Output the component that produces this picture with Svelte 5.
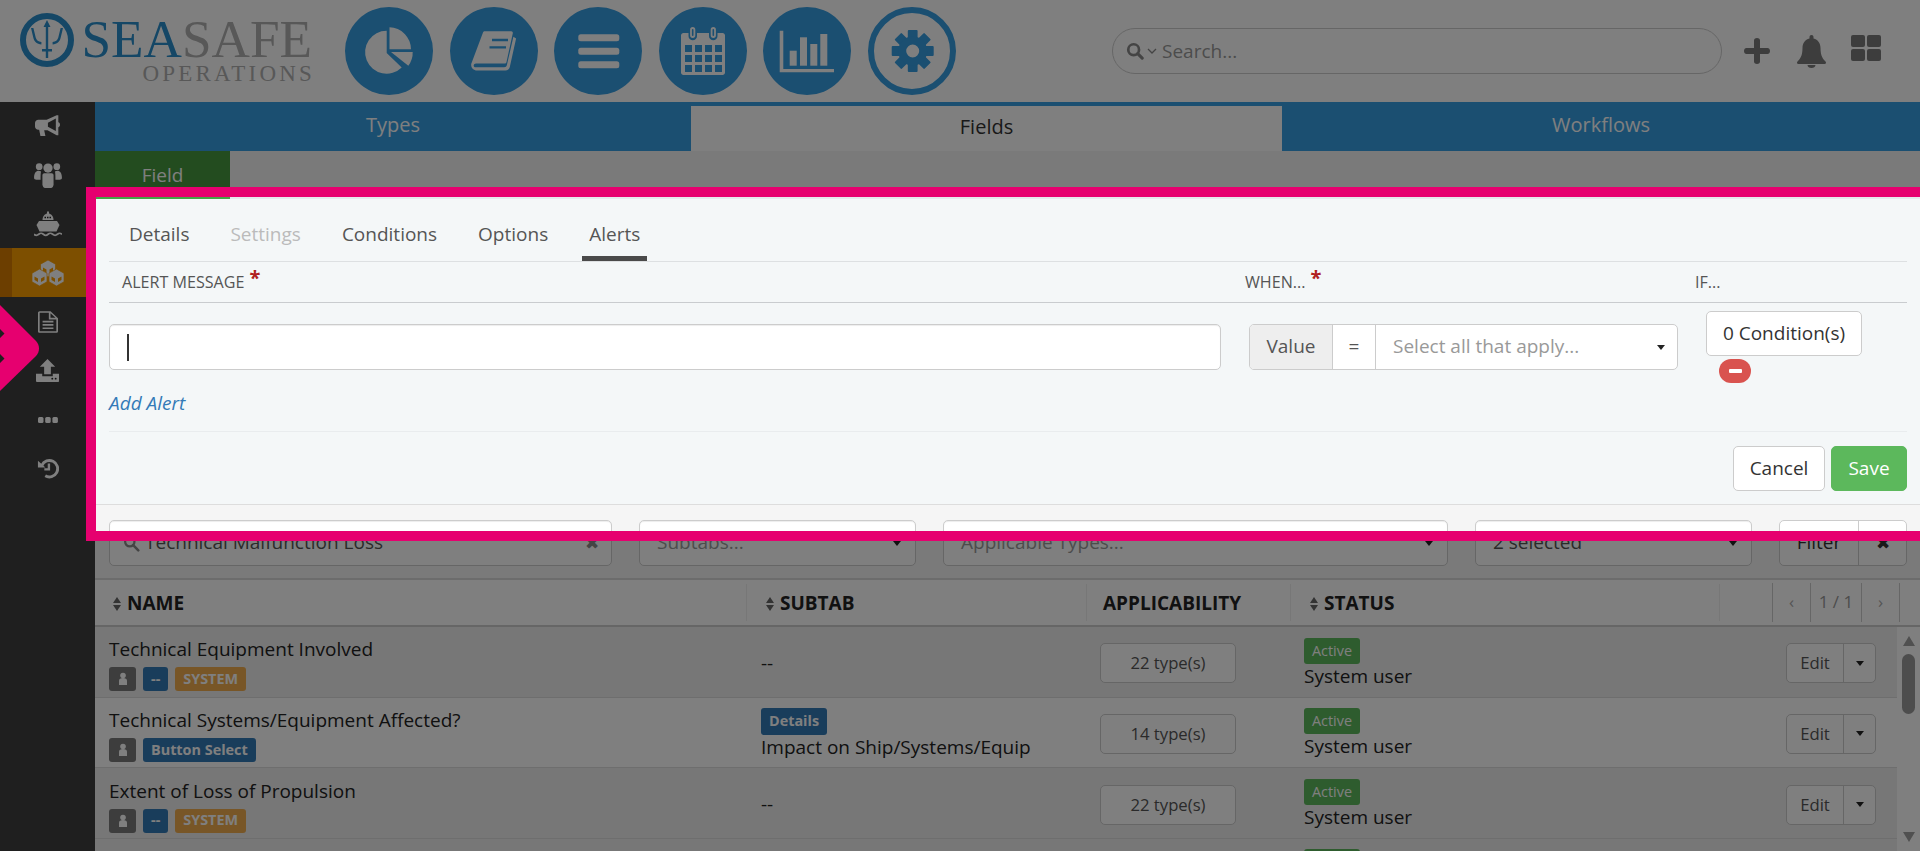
<script>
const gearTeeth = [0, 45, 90, 135, 180, 225, 270, 315];

const cubes = [
	{ x: 8.500, y: 0 },
	{ x: 0, y: 9 },
	{ x: 17, y: 9 }
];

const rows = [
	{ name: 'Technical Equipment Involved', kind: '--', system: true, tab: '', subtab: '--', types: '22 type(s)' },
	{ name: 'Technical Systems/Equipment Affected?', kind: 'Button Select', system: false, tab: 'Details', subtab: 'Impact on Ship/Systems/Equip', types: '14 type(s)' },
	{ name: 'Extent of Loss of Propulsion', kind: '--', system: true, tab: '', subtab: '--', types: '22 type(s)' }
];
</script>

<div class="page">
	<header class="topbar">
		<div class="logo">
			<svg class="trident" viewBox="0 0 54 54" aria-hidden="true">
				<circle cx="27" cy="27" r="24" fill="none" stroke="#2a8fcc" stroke-width="6" />
				<path d="M27 7l3.500 7h-2.300v31h-2.400v-31h-2.300zM11 15l2.400 10c.8 3.600 3.600 6 8 6.400v-2.400c-3-.4-5-2-5.700-4.600l-2.300-9.400zM43 15l-2.400 10c-.8 3.600-3.600 6-8 6.400v-2.400c3-.4 5-2 5.700-4.600l2.300-9.400zM22 36h10v2.400h-10z" fill="#2a8fcc" />
			</svg>
			<div class="logo-text">
				<div class="logo-name"><span class="sea">SEA</span><span class="safe">SAFE</span></div>
				<div class="logo-sub">OPERATIONS</div>
			</div>
		</div>

		<nav class="circles">
			<span class="circle">
				<svg viewBox="0 0 88 88" aria-hidden="true">
					<path d="M41.700 23.700A21.500 21.500 0 1 0 56.700 60.500L41.700 46z" fill="#fff" />
					<path d="M44.500 20.300A22 22 0 0 1 66 42.300H44.500z" fill="#fff" />
					<path d="M46 44.900H67.700A22 22 0 0 1 63.300 58.700z" fill="#fff" />
				</svg>
			</span>
			<span class="circle">
				<svg viewBox="0 0 88 88" aria-hidden="true">
					<path d="M33 25.500c.3-.8 1-1.200 1.800-1.200h26.500c1 0 1.700 1 1.500 2l-6.300 28.700c-.2 1-1 1.500-2 1.500H26c-1.200 0-2.500 1-2.300 2.300.2 1 1 1.500 2 1.500h28.500c1.500 0 2.300-.7 2.700-2.200l6.500-28.400 2.700 1.800-6.300 28.500c-.4 1.800-2.100 3.500-4.400 3.500H27c-3.500 0-6.200-2.500-5.800-6.500z" fill="#fff" />
					<path d="M42 33h16M39.500 40.300h16.500" stroke="#369ee2" stroke-width="2.300" fill="none" />
				</svg>
			</span>
			<span class="circle">
				<svg viewBox="0 0 88 88" aria-hidden="true">
					<rect x="24.300" y="27.300" width="41" height="7" rx="2.500" fill="#fff" />
					<rect x="24.300" y="40.700" width="41" height="7" rx="2.500" fill="#fff" />
					<rect x="24.300" y="54.300" width="41" height="7" rx="2.500" fill="#fff" />
				</svg>
			</span>
			<span class="circle">
				<svg viewBox="0 0 88 88" aria-hidden="true">
					<path d="M24.500 26h5v3a4 4 0 0 0 8.500 0v-3h12v3a4 4 0 0 0 8.500 0v-3h5c1.400 0 2.500 1.100 2.500 2.500v37c0 1.400-1.100 2.500-2.500 2.500h-39c-1.400 0-2.500-1.100-2.500-2.500v-37c0-1.400 1.100-2.500 2.500-2.500z" fill="#fff" />
					<rect x="32" y="21" width="3.400" height="9" rx="1.700" fill="none" stroke="#fff" stroke-width="1.800" />
					<rect x="52.600" y="21" width="3.400" height="9" rx="1.700" fill="none" stroke="#fff" stroke-width="1.800" />
					{#each [38, 48, 58] as y}
						{#each [26, 36, 46, 56] as x}
							<rect {x} {y} width="7" height="7" fill="#369ee2" />
						{/each}
					{/each}
				</svg>
			</span>
			<span class="circle">
				<svg viewBox="0 0 88 88" aria-hidden="true">
					<path d="M16.700 23.700h3.600v38.300h50.700v3.300H16.700z" fill="#fff" />
					<rect x="26.700" y="43.700" width="7" height="15" fill="#fff" />
					<rect x="37" y="30.300" width="7" height="28.400" fill="#fff" />
					<rect x="47.300" y="37" width="7" height="21.700" fill="#fff" />
					<rect x="57.300" y="27" width="7" height="31.700" fill="#fff" />
				</svg>
			</span>
			<span class="circle outline">
				<svg viewBox="0 0 88 88" aria-hidden="true">
					<g fill="#369ee2">
						{#each gearTeeth as deg}
							<rect x="39.800" y="23" width="9.800" height="10" rx="1" transform="rotate({deg} 44.700 44)" />
						{/each}
					</g>
					<circle cx="44.700" cy="44" r="10.500" fill="none" stroke="#369ee2" stroke-width="8" />
				</svg>
			</span>
		</nav>

		<div class="search">
			<svg class="search-icon" viewBox="0 0 20 20" aria-hidden="true">
				<circle cx="8.500" cy="8.500" r="6" fill="none" stroke="#888" stroke-width="3" />
				<path d="M13 13l5 5" stroke="#888" stroke-width="3.400" stroke-linecap="round" />
			</svg>
			<svg class="search-caret" viewBox="0 0 10 6" aria-hidden="true">
				<path d="M1 1l4 4 4-4" fill="none" stroke="#888" stroke-width="1.300" />
			</svg>
			<span class="search-text">Search...</span>
		</div>

		<div class="tools">
			<svg class="tool-plus" viewBox="0 0 26 26" aria-hidden="true">
				<path d="M10 2.500c0-1.400 1-2.500 3-2.500s3 1.100 3 2.500V10h7.500c1.400 0 2.500 1 2.500 3s-1.100 3-2.500 3H16v7.500c0 1.400-1 2.500-3 2.500s-3-1.100-3-2.500V16H2.500C1.100 16 0 15 0 13s1.100-3 2.500-3H10z" fill="#7a7a7a" />
			</svg>
			<svg class="tool-bell" viewBox="0 0 31 33" aria-hidden="true">
				<path d="M15.500 0c1.200 0 2 .8 2 2v1.500c4.600 1 7 5 7 9.500 0 8 2.500 11 5 13.500 1 1 .5 2.500-1 2.500H2.500c-1.500 0-2-1.500-1-2.500 2.500-2.500 5-5.500 5-13.500 0-4.500 2.400-8.500 7-9.500V2c0-1.200.8-2 2-2zM11.500 30h8c0 1.800-1.800 3-4 3s-4-1.200-4-3z" fill="#7a7a7a" />
			</svg>
			<div class="tool-grid"><i></i><i></i><i></i><i></i></div>
		</div>
	</header>

	<div class="body">
		<aside class="sidebar">
			<div class="side-item first">
				<svg class="icon-horn" viewBox="0 0 30 26" aria-hidden="true">
					<path fill-rule="evenodd" d="M26 0h2v8.500c1.200.5 2 1.300 2 3s-.8 2.500-2 3V24h-2l-11-6H11l1.500 7H6.500L5 17.500H4c-2.200 0-4-1.800-4-4v-4c0-2.200 1.800-4 4-4h10zM25 4l-9.500 5v5l9.500 5z" fill="#fff" />
				</svg>
			</div>
			<div class="side-item">
				<svg viewBox="0 0 30 28" aria-hidden="true">
					<circle cx="5.500" cy="5" r="3.600" fill="#fff" /><circle cx="24.500" cy="5" r="3.600" fill="#fff" />
					<circle cx="15" cy="6.500" r="5" fill="#fff" />
					<path d="M0 17c0-5 2-7.500 5-7.500 1 0 1.500.3 2.500.8-.5 2-.5 5-.5 8.700H2.500C1 19 0 18.500 0 17zM30 17c0-5-2-7.500-5-7.500-1 0-1.500.3-2.500.8.500 2 .5 5 .5 8.700h4.500c1.500 0 2.500-.5 2.500-2z" fill="#fff" />
					<path d="M9 14c0-1 1-2 2-2h8c1 0 2 1 2 2v10c0 2-1 4-3 4h-6c-2 0-3-2-3-4z" fill="#fff" />
				</svg>
			</div>
			<div class="side-item">
				<svg viewBox="0 0 28 25" aria-hidden="true">
					<rect x="13" y="0" width="2" height="2.500" fill="#fff" />
					<path d="M8.500 8.500C8.500 4.500 11 2 14 2s5.500 2.500 5.500 6.500z" fill="#fff" />
					<path d="M10.500 6h7" stroke="#222" stroke-width="1.500" stroke-dasharray="1.500 1" />
					<path d="M5 9.500h18l2.500 4-3 6.500H5.500l-3-6.500z" fill="#fff" />
					<path d="M0 22.800c2 1.600 2.700 1.600 4.700 0s2.700-1.600 4.700 0 2.700 1.600 4.600 0 2.700-1.600 4.700 0 2.700 1.600 4.700 0 2.700-1.600 4.600 0" fill="none" stroke="#fff" stroke-width="1.800" />
				</svg>
			</div>
			<div class="side-item active">
				<svg class="icon-cubes" viewBox="0 0 32 26" aria-hidden="true">
					{#each cubes as cube}
						<g transform="translate({cube.x} {cube.y})">
							<path d="M7.500 0L15 4.200v8.600L7.500 17 0 12.800V4.200z" fill="#fff" stroke="#fa9f00" stroke-width=".7" />
							<path d="M2.500 7.500l3.500 2v3.500l-3.500-2zM12.500 7.500l-3.500 2v3.500l3.500-2z" fill="#fa9f00" />
						</g>
					{/each}
				</svg>
			</div>
			<div class="side-item">
				<svg class="icon-file" viewBox="0 0 24 26" aria-hidden="true">
					<path fill-rule="evenodd" d="M2 0h13l9 8.500V24c0 1.100-.9 2-2 2H2c-1.100 0-2-.9-2-2V2C0 .9.900 0 2 0zM2 2v22h20V10h-9V2zm13 .5V8h6z" fill="#fff" />
					<path d="M5.500 12.500h13M5.500 16.500h13M5.500 20.500h13" stroke="#fff" stroke-width="2" />
				</svg>
			</div>
			<div class="side-item">
				<svg class="icon-upload" viewBox="0 0 24 24" aria-hidden="true">
					<path d="M12 0l8 8h-4.500v8h-7V8H4z" fill="#fff" />
					<path d="M0 15.500h6.500V18h11v-2.500H24V23c0 .6-.4 1-1 1H1c-.6 0-1-.4-1-1z" fill="#fff" />
					<circle cx="17" cy="20.500" r="1" fill="#222" /><circle cx="20.500" cy="20.500" r="1" fill="#222" />
				</svg>
			</div>
			<div class="side-item">
				<svg class="icon-dots" viewBox="0 0 20 6" aria-hidden="true">
					<rect x="0" y="0" width="5.500" height="6" rx="1.500" fill="#fff" />
					<rect x="7.200" y="0" width="5.500" height="6" rx="1.500" fill="#fff" />
					<rect x="14.400" y="0" width="5.500" height="6" rx="1.500" fill="#fff" />
				</svg>
			</div>
			<div class="side-item">
				<svg class="icon-history" viewBox="0 0 24 22" aria-hidden="true">
					<path d="M5.300 7.500A9 9 0 1 1 9 19" fill="none" stroke="#fff" stroke-width="3.200" />
					<path d="M1 2.500l8.200 7.500H1z" fill="#fff" />
					<path d="M13 5.500v6.500H8" fill="none" stroke="#fff" stroke-width="2.600" />
				</svg>
			</div>
		</aside>

		<main class="content">
			<div class="main-tabs">
				<div class="main-tab">Types</div>
				<div class="main-tab current">Fields</div>
				<div class="main-tab">Workflows</div>
			</div>
			<div class="field-tab-row"><div class="field-tab">Field</div></div>

			<section class="panel">
				<div class="sub-tabs">
					<span class="sub-tab">Details</span>
					<span class="sub-tab disabled">Settings</span>
					<span class="sub-tab">Conditions</span>
					<span class="sub-tab">Options</span>
					<span class="sub-tab selected">Alerts</span>
				</div>

				<div class="alert-head">
					<span class="alert-label first">ALERT MESSAGE<b class="req">*</b></span>
					<span class="alert-label">WHEN...<b class="req">*</b></span>
					<span class="alert-label">IF...</span>
				</div>

				<div class="alert-row">
					<div class="field message"><span class="text-caret"></span></div>
					<div class="when">
						<span class="when-value">Value</span>
						<span class="when-eq">=</span>
						<span class="when-select">Select all that apply...<span class="caret"></span></span>
					</div>
					<div class="cond-col">
						<div class="btn cond">0 Condition(s)</div>
						<div class="remove"><span></span></div>
					</div>
				</div>
				<div class="add-alert">Add Alert</div>

				<div class="panel-foot">
					<div class="btn">Cancel</div>
					<div class="btn save">Save</div>
				</div>
			</section>

			<div class="filters">
				<div class="field search-filter">
					<svg viewBox="0 0 20 20" aria-hidden="true">
						<circle cx="8" cy="8" r="5.500" fill="none" stroke="#888" stroke-width="2.600" />
						<path d="M12 12l6 6" stroke="#888" stroke-width="3" stroke-linecap="round" />
					</svg>
					<span class="filter-value">Technical Malfunction Loss</span>
					<span class="clear">✖</span>
				</div>
				<div class="field select"><span class="placeholder">Subtabs...</span><span class="caret"></span></div>
				<div class="field select"><span class="placeholder">Applicable Types...</span><span class="caret"></span></div>
				<div class="field select"><span class="filter-value">2 selected</span><span class="caret"></span></div>
				<div class="filter-btns">
					<div class="filter-btn">Filter</div>
					<div class="filter-btn close">✖</div>
				</div>
			</div>

			<div class="table-head">
				<div class="th"><span class="sort"></span>NAME</div>
				<div class="th divided"><span class="sort"></span>SUBTAB</div>
				<div class="th divided plain">APPLICABILITY</div>
				<div class="th divided"><span class="sort"></span>STATUS</div>
				<div class="th divided pager-cell">
					<div class="pager">
						<span>‹</span><span class="pages">1 / 1</span><span>›</span>
					</div>
				</div>
			</div>

			<div class="table-body">
				<div class="rows">
					{#each rows as row, i}
						<div class="row" class:striped={i % 2 === 0}>
							<div class="cell name">
								<div class="row-name">{row.name}</div>
								<div class="badges">
									<span class="badge user">
										<svg viewBox="0 0 10 14" aria-hidden="true">
											<circle cx="5" cy="3.500" r="2.800" fill="#fff" />
											<path d="M1 13V8.500C1 7 2.500 6 5 6s4 1 4 2.500V13z" fill="#fff" />
										</svg>
									</span>
									<span class="badge blue">{row.kind}</span>
									{#if row.system}<span class="badge orange">SYSTEM</span>{/if}
								</div>
							</div>
							<div class="cell subtab">
								{#if row.tab}<span class="badge blue tab-badge">{row.tab}</span>{/if}
								<span>{row.subtab}</span>
							</div>
							<div class="cell applic"><div class="btn types">{row.types}</div></div>
							<div class="cell status">
								<span class="badge green">Active</span>
								<span>System user</span>
							</div>
							<div class="cell edit">
								<div class="edit-group"><span class="edit-label">Edit</span><span class="edit-drop"><span class="caret"></span></span></div>
							</div>
						</div>
					{/each}
					<div class="row striped">
						<div class="cell"></div>
						<div class="cell subtab"></div>
						<div class="cell applic"></div>
						<div class="cell status last"><span class="badge green"></span></div>
						<div class="cell edit"></div>
					</div>
				</div>
				<div class="scrollbar">
					<span class="arrow up"></span>
					<span class="thumb"></span>
					<span class="arrow down"></span>
				</div>
			</div>
		</main>
	</div>

	<!-- tutorial highlight on top of the page -->
	<div class="highlight"></div>
	<svg class="pointer" viewBox="0 0 41 86" aria-hidden="true">
		<path d="M0 0L36 36c4 4 4 11 0 15L0 86z" fill="#e6006f" />
		<path d="M0 24l4.500 4.500L0 33zM0 49l4.500 4.500L0 58z" fill="#1f1f1f" />
	</svg>
</div>

<style>
:global(body) {
	margin: 0;
	overflow: hidden;
	background: #fff;
}

.page {
	position: relative;
	width: 1920px;
	height: 851px;
	overflow: hidden;
	display: flex;
	flex-direction: column;
	font-family: "Open Sans", "Noto Sans", sans-serif;
	font-size: 19px;
	line-height: 1.32;
	color: #333;
}

/* header */
.topbar {
	height: 102px;
	flex: none;
	display: flex;
	align-items: center;
	background: #fff;
}

.logo {
	width: 345px;
	flex: none;
	display: flex;
	align-items: flex-start;
	height: 88px;
	padding-left: 20px;
	box-sizing: border-box;
}

.trident {
	width: 54px;
	height: 54px;
	margin-top: 6px;
}

.logo-text {
	margin-left: 7px;
	font-family: "Liberation Serif", serif;
	text-align: right;
	width: 231px;
}

.logo-name {
	font-size: 53.200px;
	line-height: 46px;
	margin-top: 10px;
	white-space: nowrap;
}

.sea { color: #2a8fcc; }
.safe { color: #b0b0b0; }

.logo-sub {
	font-size: 23px;
	line-height: 22px;
	letter-spacing: 3.200px;
	margin-right: -3px;
	color: #b0b0b0;
}

.circles {
	display: flex;
	gap: 16.500px;
	width: 767px;
	flex: none;
}

.circle {
	width: 88px;
	height: 88px;
	border-radius: 50%;
	background: #369ee2;
	box-sizing: border-box;
}

.circle svg {
	display: block;
	width: 88px;
	height: 88px;
}

.circle.outline {
	background: #fff;
	border: 6px solid #369ee2;
}

.circle.outline svg {
	margin: -6px;
}

.search {
	width: 610px;
	height: 46px;
	flex: none;
	box-sizing: border-box;
	border: 1.500px solid #ccc;
	border-radius: 23px;
	display: flex;
	align-items: center;
	padding-left: 13px;
}

.search-icon {
	width: 18px;
	height: 18px;
}

.search-caret {
	width: 10px;
	height: 6px;
	margin: 0 3px 0 3px;
}

.search-text {
	color: #999;
	margin-left: 2px;
	padding-top: 1px;
}

.tools {
	position: relative;
	flex: 1;
	height: 40px;
	display: flex;
	align-items: center;
	padding-left: 22px;
}

.tool-plus {
	width: 26px;
	height: 26px;
}

.tool-bell {
	width: 31px;
	height: 33px;
	margin-left: 26px;
}

.tool-grid {
	display: grid;
	grid-template-columns: 14px 14px;
	grid-auto-rows: 12px;
	gap: 2px;
	margin: -6px 0 0 24px;
}

.tool-grid i {
	background: #7a7a7a;
	border-radius: 2px;
}

/* body */
.body {
	flex: 1;
	display: flex;
	min-height: 0;
}

.sidebar {
	width: 95px;
	flex: none;
	background: #3e3e3e;
	display: flex;
	flex-direction: column;
}

.side-item {
	height: 49px;
	flex: none;
	display: flex;
	align-items: center;
	justify-content: center;
}

.side-item.first {
	height: 48px;
}

.side-item svg {
	width: 28px;
	height: 26px;
}

.side-item svg.icon-horn { width: 25px; }
.side-item svg.icon-cubes { width: 32px; }
.side-item svg.icon-file { width: 20px; height: 24px; }
.side-item svg.icon-upload { width: 23px; height: 23px; }
.side-item svg.icon-dots { width: 20px; height: 6px; }
.side-item svg.icon-history { width: 22px; height: 21px; }

.side-item.active {
	background: #fa9f00;
	border-left: 12px solid #d87c00;
	padding-right: 12px;
}

.content {
	flex: 1;
	min-width: 0;
	background: #f5f5f5;
	display: flex;
	flex-direction: column;
}

.main-tabs {
	display: grid;
	grid-template-columns: 596px 591px 1fr;
	height: 49px;
	flex: none;
	background: #369ee2;
}

.main-tab {
	display: flex;
	align-items: center;
	justify-content: center;
	color: #fff;
	font-size: 20px;
	padding-bottom: 2px;
	box-sizing: border-box;
}

.main-tab.current {
	background: #fff;
	color: #333;
	margin-top: 4px;
}

.field-tab-row {
	height: 46px;
	flex: none;
}

.field-tab {
	width: 135px;
	height: 48px;
	background: #47983e;
	color: #fff;
	box-sizing: border-box;
	text-align: center;
	padding-top: 12px;
}

.panel {
	position: relative;
	background: #f4f7f8;
	border-top: 2px solid #e6e9eb;
	padding: 0 13px 0 14px;
	box-sizing: border-box;
	height: 307px;
	flex: none;
}

.panel::before {
	content: "";
	position: absolute;
	left: 0;
	top: -2px;
	width: 135px;
	height: 2px;
	background: #47a447;
}

.sub-tabs {
	height: 62px;
	display: flex;
	align-items: flex-start;
	border-bottom: 1px solid #dde0e2;
	padding-left: 13px;
	gap: 27px;
}

.sub-tab {
	height: 56px;
	padding: 17px 7px 0;
	box-sizing: border-box;
	margin-top: 6px;
	white-space: nowrap;
	color: #555;
}

.sub-tab.disabled { color: #bbb; }

.sub-tab.selected {
	border-bottom: 5px solid #4a4a4a;
}

.alert-head {
	display: grid;
	grid-template-columns: 1136px 450px 1fr;
	height: 41px;
	align-items: center;
	border-bottom: 1px solid #c9cccf;
	box-sizing: border-box;
	padding-top: 2px;
}

.alert-label {
	font-size: 16.100px;
	color: #555;
}

.alert-label.first {
	padding-left: 13px;
}

.req {
	color: #b02020;
	font-size: 20px;
	line-height: 0;
	margin-left: 5px;
	position: relative;
	top: -3px;
}

.alert-row {
	display: grid;
	grid-template-columns: 1112px 429px 156px;
	column-gap: 28px;
	padding-top: 21px;
	height: 128px;
	box-sizing: border-box;
}

.field {
	height: 46px;
	box-sizing: border-box;
	background: #fff;
	border: 1px solid #ccc;
	border-radius: 5px;
	box-shadow: inset 0 1px 1px rgba(0, 0, 0, 0.075);
	display: flex;
	align-items: center;
}

.message {
	padding-left: 17px;
}

.text-caret {
	width: 1.500px;
	height: 27px;
	background: #333;
}

.when {
	display: flex;
	height: 46px;
	box-sizing: border-box;
	border: 1px solid #ccc;
	border-radius: 5px;
	background: #fff;
	overflow: hidden;
}

.when span {
	display: flex;
	align-items: center;
}

.when-value {
	width: 83px;
	justify-content: center;
	background: #eee;
	color: #555;
	border-right: 1px solid #ccc;
	box-sizing: border-box;
}

.when-eq {
	width: 43px;
	justify-content: center;
	color: #555;
	border-right: 1px solid #ccc;
	box-sizing: border-box;
}

.when-select {
	flex: 1;
	padding: 0 12px 0 17px;
	color: #999;
	justify-content: space-between;
}

.caret {
	width: 0;
	height: 0;
	border-left: 4.500px solid transparent;
	border-right: 4.500px solid transparent;
	border-top: 5px solid #222;
}

.cond-col {
	margin-top: -13px;
}

.btn {
	display: flex;
	align-items: center;
	justify-content: center;
	height: 45px;
	box-sizing: border-box;
	background: #fff;
	border: 1px solid #ccc;
	border-radius: 5px;
	color: #333;
}

.remove {
	width: 32px;
	height: 24px;
	margin: 3px 0 0 13px;
	background: #d9534f;
	border-radius: 12px;
	display: flex;
	align-items: center;
	justify-content: center;
}

.remove span {
	width: 13px;
	height: 4.500px;
	background: #fff;
	border-radius: 1px;
}

.add-alert {
	position: absolute;
	left: 14px;
	top: 192px;
	font-style: italic;
	color: #337ab7;
}

.panel-foot {
	border-top: 1px solid #e9ecee;
	height: 72px;
	display: flex;
	justify-content: flex-end;
	align-items: flex-start;
	padding-top: 14px;
	box-sizing: border-box;
	gap: 6px;
}

.panel-foot .btn {
	width: 92px;
	height: 45px;
}

.panel-foot .save {
	width: 76px;
	background: #5cb85c;
	border-color: #5cb85c;
	color: #fff;
}

.filters {
	display: grid;
	grid-template-columns: 503px 277px 505px 277px 128px;
	column-gap: 27px;
	padding: 15px 13px 0 14px;
	height: 76px;
	flex: none;
	box-sizing: border-box;
	border-top: 1px solid #ddd;
	border-bottom: 2px solid #d8d8d8;
	background: #f5f5f5;
}

.search-filter {
	padding: 0 12px 0 13px;
	gap: 5px;
}

.search-filter svg {
	width: 17px;
	height: 17px;
}

.filter-value {
	flex: 1;
	color: #555;
}

.clear {
	font-size: 17px;
	color: #888;
}

.select {
	padding: 0 14px 0 17px;
	justify-content: space-between;
}

.placeholder {
	color: #999;
}

.filter-btns {
	display: flex;
	height: 46px;
	border: 1px solid #ccc;
	border-radius: 5px;
	background: #fff;
	box-sizing: border-box;
}

.filter-btn {
	width: 78px;
	display: flex;
	align-items: center;
	justify-content: center;
	border-right: 1px solid #ccc;
	color: #333;
}

.filter-btn.close {
	flex: 1;
	border: none;
	font-size: 17px;
}

/* table */
.table-head {
	display: grid;
	grid-template-columns: 651px 340px 204px 429px 1fr;
	height: 47px;
	flex: none;
	background: #fff;
	border-bottom: 2px solid #ccc;
	box-sizing: border-box;
}

.th {
	display: flex;
	align-items: center;
	gap: 6px;
	padding-left: 18px;
	padding-top: 2px;
	font-weight: 700;
	color: #222;
	white-space: nowrap;
	position: relative;
}

.th.divided::before {
	content: "";
	position: absolute;
	left: 0;
	top: 4px;
	bottom: 4px;
	width: 1px;
	background: #eee;
}

.th.divided { padding-left: 20px; }
.th.plain { padding-left: 17px; }

.sort {
	width: 0;
	height: 14px;
	border-left: 4.500px solid transparent;
	border-right: 4.500px solid transparent;
	position: relative;
}

.sort::before,
.sort::after {
	content: "";
	position: absolute;
	left: -4.500px;
	border-left: 4.500px solid transparent;
	border-right: 4.500px solid transparent;
}

.sort::before {
	top: 0;
	border-bottom: 6px solid #666;
}

.sort::after {
	bottom: 0;
	border-top: 6px solid #666;
}

.pager-cell {
	justify-content: flex-end;
	padding: 0 20px 0 0;
	font-weight: 400;
	font-size: 17px;
}

.pager {
	display: flex;
	height: 39px;
	border-left: 1px solid #ccc;
	border-right: 1px solid #ccc;
}

.pager span {
	width: 37px;
	display: flex;
	align-items: center;
	justify-content: center;
	color: #aaa;
}

.pager .pages {
	width: 50px;
	border-left: 1px solid #ccc;
	border-right: 1px solid #ccc;
	color: #999;
}

.table-body {
	flex: 1;
	min-height: 0;
	display: flex;
	background: #fff;
}

.rows {
	flex: 1;
	min-width: 0;
}

.row {
	display: grid;
	grid-template-columns: 651px 340px 204px 1fr auto;
	height: 70.670px;
	box-sizing: border-box;
	border-bottom: 1.500px solid #ddd;
	background: #fff;
}

.row.striped {
	background: #eee;
}

.cell {
	display: flex;
	flex-direction: column;
	justify-content: center;
	align-items: flex-start;
	padding-left: 14px;
	padding-top: 3px;
	box-sizing: border-box;
	color: #222;
	white-space: nowrap;
}

.cell.name { padding-top: 5px; }
.cell.subtab { padding-left: 15px; }
.cell.status { padding-left: 14px; }
.cell.status.last { justify-content: flex-start; padding-top: 10px; }

.row-name {
	line-height: 25px;
}

.badges {
	display: flex;
	gap: 7px;
	margin-top: 5px;
}

.badge {
	display: inline-flex;
	align-items: center;
	justify-content: center;
	height: 24px;
	padding: 0 8px;
	box-sizing: border-box;
	border-radius: 3px;
	font-size: 14.400px;
	font-weight: 700;
	color: #fff;
	line-height: 1;
}

.badge.user {
	width: 27px;
	padding: 0;
	background: #7a7a7a;
}

.badge.user svg {
	width: 10px;
	height: 14px;
}

.badge.blue { background: #337ab7; }
.badge.orange { background: #f0ad4e; }

.tab-badge {
	height: 27px;
}

.badge.green {
	background: #5cb85c;
	height: 26px;
	min-width: 56px;
	font-weight: 400;
	font-size: 14.400px;
}

.types {
	width: 136px;
	height: 40px;
	font-size: 16.700px;
	color: #555;
}

.edit {
	padding: 3px 21px 0 0;
}

.edit-group {
	display: flex;
	width: 90px;
	height: 40px;
	border: 1px solid #ccc;
	border-radius: 5px;
	box-sizing: border-box;
	background: #fff;
	font-size: 16.700px;
	color: #555;
}

.edit-label {
	width: 56px;
	display: flex;
	align-items: center;
	justify-content: center;
	border-right: 1px solid #ccc;
}

.edit-drop {
	flex: 1;
	display: flex;
	align-items: center;
	justify-content: center;
}

.scrollbar {
	width: 23px;
	flex: none;
	position: relative;
	background: #fff;
}

.thumb {
	position: absolute;
	left: 5px;
	top: 27px;
	width: 13px;
	height: 60px;
	border-radius: 7px;
	background: #9a9a9a;
}

.arrow {
	position: absolute;
	left: 6px;
	width: 0;
	height: 0;
	border-left: 6px solid transparent;
	border-right: 6px solid transparent;
}

.arrow.up {
	top: 9px;
	border-bottom: 10px solid #a0a0a0;
}

.arrow.down {
	top: 205px;
	border-top: 10px solid #a0a0a0;
}

/* overlay */
.highlight {
	position: absolute;
	left: 86px;
	top: 187px;
	width: 1860px;
	height: 354px;
	box-sizing: border-box;
	border: 10px solid #e6006f;
	box-shadow: 0 0 0 3000px rgba(0, 0, 0, 0.5);
}

.pointer {
	position: absolute;
	left: 0;
	top: 305px;
	width: 41px;
	height: 86px;
}
</style>
